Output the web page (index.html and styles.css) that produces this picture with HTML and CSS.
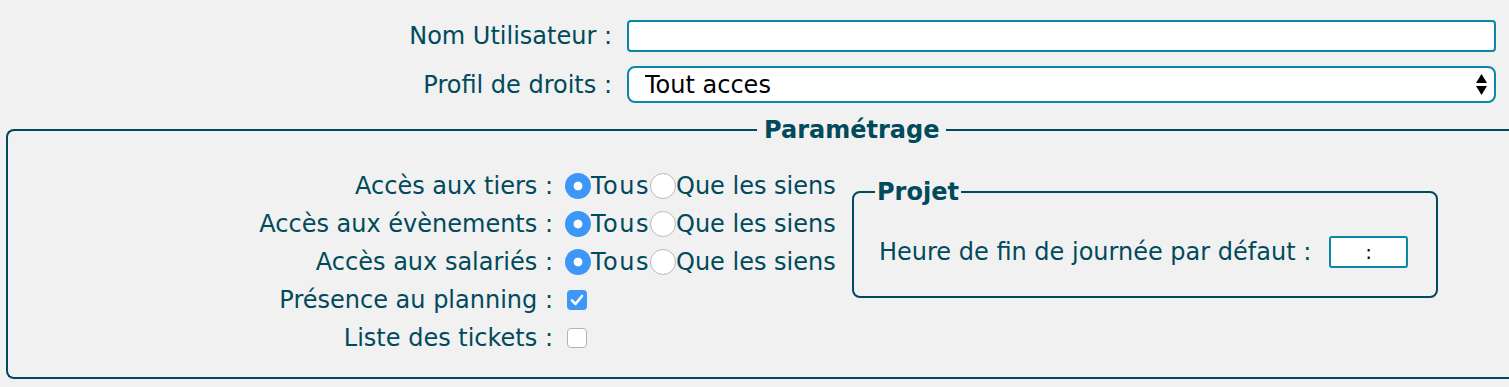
FILE: index.html
```html
<!DOCTYPE html>
<html lang="fr">
  <head>
    <meta charset="UTF-8" />
    <meta name="viewport" content="width=device-width, initial-scale=1.0" />
    <title>Utilisateur</title>
    <link rel="stylesheet" href="styles.css">
  </head>
  <body>
    <div class="top">
      <label class="lbl" for="nom">Nom Utilisateur :</label>
      <input id="nom" class="field" type="text">

      <label class="lbl" for="profil">Profil de droits :</label>
      <div class="select-wrap">
        <select id="profil" class="field select">
          <option>Tout acces</option>
        </select>
        <svg class="arrows" width="11" height="21" viewBox="0 0 11 21">
          <path d="M5.5 0 L11 9 L0 9 Z" fill="#000"/>
          <path d="M0 12 L11 12 L5.5 21 Z" fill="#000"/>
        </svg>
      </div>
    </div>

    <fieldset class="param">
      <legend>Paramétrage</legend>
      <div class="param-body">
        <div class="rights">
          <span class="lbl">Accès aux tiers :</span>
          <span class="choices">
            <input type="radio" name="tiers" checked><span class="all">Tous</span>
            <input type="radio" name="tiers"><span>Que les siens</span>
          </span>

          <span class="lbl">Accès aux évènements :</span>
          <span class="choices">
            <input type="radio" name="even" checked><span class="all">Tous</span>
            <input type="radio" name="even"><span>Que les siens</span>
          </span>

          <span class="lbl">Accès aux salariés :</span>
          <span class="choices">
            <input type="radio" name="sal" checked><span class="all">Tous</span>
            <input type="radio" name="sal"><span>Que les siens</span>
          </span>

          <span class="lbl">Présence au planning :</span>
          <span class="choices">
            <span class="check">
              <input type="checkbox" checked>
              <svg class="tick" width="20" height="20" viewBox="0 0 20 20">
                <path d="M5 10.5 L8.5 14 L15 6" fill="none" stroke="#fff" stroke-width="2.6" stroke-linecap="round" stroke-linejoin="round"/>
              </svg>
            </span>
          </span>

          <span class="lbl">Liste des tickets :</span>
          <span class="choices">
            <span class="check">
              <input type="checkbox">
            </span>
          </span>
        </div>

        <fieldset class="projet">
          <legend>Projet</legend>
          <div class="heure">
            <label for="fin">Heure de fin de journée par défaut :</label>
            <input id="fin" class="field time" type="text" value=":">
          </div>
        </fieldset>
      </div>
    </fieldset>
  </body>
</html>
```

FILE: styles.css
```css
body {
  margin: 0;
  background: #f1f1f1;
  font-family: "DejaVu Sans", Verdana, sans-serif;
  font-size: 24px;
  color: #004a5b;
  overflow: hidden;
}

.lbl {
  text-align: right;
  white-space: nowrap;
}

.top {
  display: grid;
  grid-template-columns: 612px 869px;
  grid-template-rows: 32px 37px;
  column-gap: 15px;
  row-gap: 14px;
  padding-top: 20px;
  align-items: center;
}

.field {
  box-sizing: border-box;
  height: 32px;
  margin: 0;
  border: 2px solid #0a89a7;
  border-radius: 4px;
  background: #fff;
  font: inherit;
  color: #000;
  outline: none;
}

.select-wrap {
  position: relative;
  height: 37px;
}

.select {
  appearance: none;
  width: 100%;
  height: 37px;
  border-radius: 8px;
  padding: 2px 0 0 16px;
  line-height: 31px;
}

.arrows {
  position: absolute;
  right: 9px;
  top: 8px;
  pointer-events: none;
}

/* the right side of this box runs off the page in the original */
.param {
  box-sizing: border-box;
  margin: 15px 0 0 6px;
  padding: 25px 0 20px 0;
  border: 2px solid #004a5b;
  border-right: 0;
  border-radius: 8px 0 0 8px;
}

.param legend,
.projet legend {
  font-weight: bold;
  line-height: 24px;
}

.param > legend {
  margin-left: 749px;
  padding: 0 7px;
}

.param-body {
  display: flex;
  align-items: flex-start;
}

.rights {
  display: grid;
  grid-template-columns: 545px 287px;
  grid-auto-rows: 38px;
  column-gap: 12px;
  align-items: center;
}

.choices {
  display: flex;
  align-items: center;
  white-space: nowrap;
}

.all {
  letter-spacing: 1.5px;
}

input[type="radio"] {
  appearance: none;
  box-sizing: border-box;
  width: 26px;
  height: 26px;
  margin: 0;
  border-radius: 50%;
  border: 1px solid #b9b9b9;
  background: #fff;
}

input[type="radio"]:checked {
  border: 0;
  background: radial-gradient(circle, #fff 0 4px, #3c97f8 4.8px);
}

.check {
  position: relative;
  display: inline-block;
  width: 20px;
  height: 20px;
  margin-left: 2px;
}

.check input {
  appearance: none;
  box-sizing: border-box;
  display: block;
  width: 20px;
  height: 20px;
  margin: 0;
  border: 1px solid #b3b3b3;
  border-radius: 4px;
  background: #fff;
}

.check input:checked {
  border: 0;
  background: #3c97f8;
}

.tick {
  position: absolute;
  left: 0;
  top: 0;
  pointer-events: none;
}

.projet {
  box-sizing: border-box;
  width: 586px;
  margin: 13px 0 0 0;
  padding: 32px 28px 28px 25px;
  border: 2px solid #004a5b;
  border-radius: 8px;
}

.projet legend {
  margin-left: -4px;
  padding: 0 2px;
}

.heure {
  display: flex;
  align-items: center;
  justify-content: space-between;
  height: 32px;
  white-space: nowrap;
}

.time {
  width: 79px;
  text-align: center;
  font-size: 20px;
  border-radius: 3px;
}
```
